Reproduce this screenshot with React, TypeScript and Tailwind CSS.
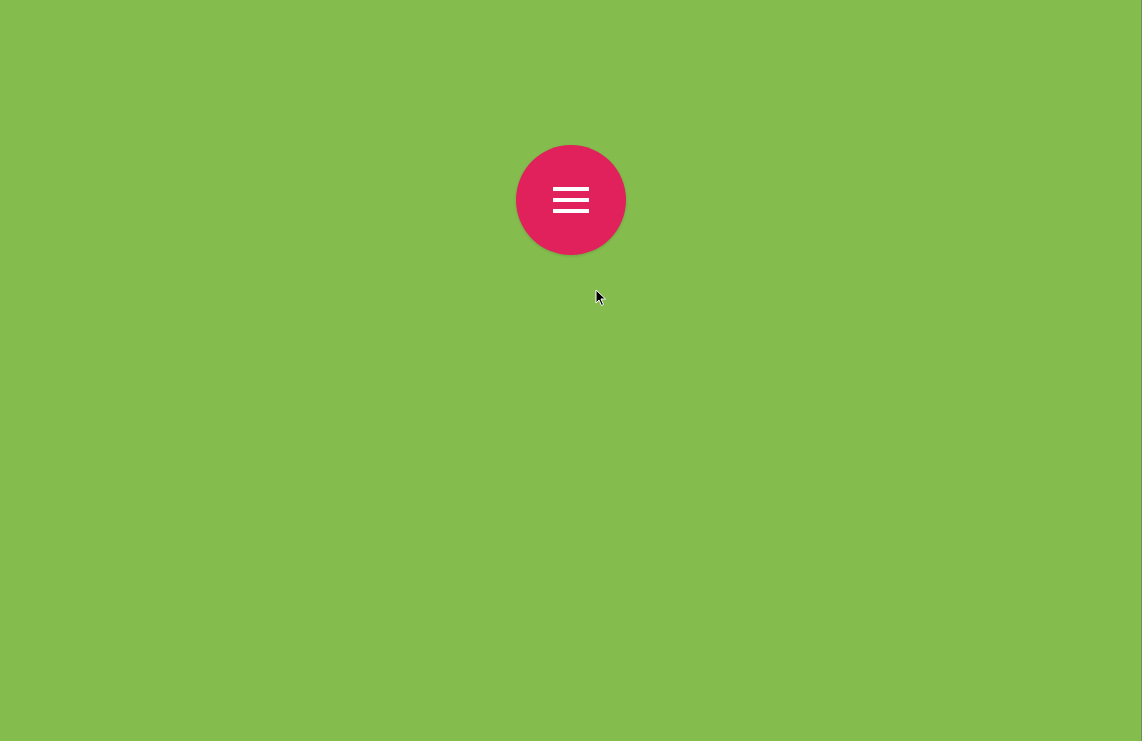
export default function App() {
  return (
    <div className="relative min-h-[741px] w-full bg-[#84bd4e] flex justify-center pt-[145px] overflow-hidden">
      <button
        type="button"
        aria-label="Menu"
        className="w-[110px] h-[110px] rounded-full bg-[#e0215b] flex flex-col items-center justify-center gap-[7px] shadow-[0_1px_3px_rgba(0,0,0,0.15)]"
      >
        <span className="block w-[36px] h-[4px] bg-white" />
        <span className="block w-[36px] h-[4px] bg-white" />
        <span className="block w-[36px] h-[4px] bg-white" />
      </button>
      <div className="absolute top-0 right-0 h-full w-px bg-[#6f8f58]" />
      <svg className="absolute left-[595px] top-[289px]" width="12" height="18" viewBox="0 0 12 18">
        <path d="M1 1 L1 14 L4 11 L6.5 16.5 L8.5 15.5 L6 10 L10.5 10 Z" fill="#000" stroke="#fff" strokeWidth="1" />
      </svg>
    </div>
  )
}
